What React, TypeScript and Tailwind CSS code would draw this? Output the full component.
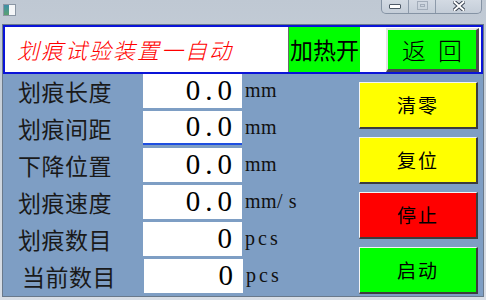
import React from 'react';

const cjk = "font-['Noto_Sans_CJK_SC','Noto_Sans',sans-serif]";

const rows = [
  { label: '划痕长度', value: '0.0', unit: 'mm' },
  { label: '划痕间距', value: '0.0', unit: 'mm', focus: true },
  { label: '下降位置', value: '0.0', unit: 'mm' },
  { label: '划痕速度', value: '0.0', unit: 'mm/ s' },
  { label: '划痕数目', value: '0', unit: 'pcs' },
  { label: '当前数目', value: '0', unit: 'pcs', shift: true },
];

const buttons = [
  { text: '清零', bg: 'bg-[#ffff00]' },
  { text: '复位', bg: 'bg-[#ffff00]' },
  { text: '停止', bg: 'bg-[#ff0000]' },
  { text: '启动', bg: 'bg-[#00ff00]' },
];

const TitleBar = () => (
  <div className="h-[24px] flex items-start justify-between">
    {/* app icon */}
    <div className="ml-[3px] mt-[4px] w-[13px] h-[12px] flex border border-[#8a96a4] bg-white">
      <div className="w-[5px] h-full bg-gradient-to-b from-[#3f8fa8] to-[#5aa070]" />
      <div className="flex-1 bg-[#f4f6f8]" />
    </div>
    {/* caption buttons */}
    <div className="mr-[4px] flex h-[14px] border border-t-0 border-[#8593a4] rounded-b-[5px] overflow-hidden bg-gradient-to-b from-[#d3dae3] to-[#c4cdd8]">
      <div className="w-[27px] flex justify-center pt-[4px] border-r border-[#8d9aaa]">
        <div className="w-[12px] h-[5px] bg-white border border-[#4f5a68] rounded-[1px]" />
      </div>
      <div className="w-[27px] flex justify-center pt-[1px] border-r border-[#8d9aaa]">
        <div className="w-[11px] h-[9px] border border-[#a3adba] flex items-center justify-center">
          <div className="w-[5px] h-[3px] border border-[#a3adba]" />
        </div>
      </div>
      <div className="w-[45px] flex justify-center pt-[1px]">
        <svg width="12" height="10" viewBox="0 0 12 10">
          <path d="M1.5 1 L10.5 9 M10.5 1 L1.5 9" stroke="#3d4654" strokeWidth="4" strokeLinecap="square" />
          <path d="M1.5 1 L10.5 9 M10.5 1 L1.5 9" stroke="#ffffff" strokeWidth="2" strokeLinecap="square" />
        </svg>
      </div>
    </div>
  </div>
);

const Header = () => (
  <div className="h-[49px] border-2 border-[#0a14d8] bg-white flex items-stretch">
    <div className={`w-[283px] pl-[12px] flex items-center text-[22px] font-light italic tracking-[2px] text-[#ff0000] ${cjk}`}>
      划痕试验装置一自动
    </div>
    <div className={`w-[72px] bg-[#00ff00] border-l border-[#6a6a6a] flex items-center justify-center text-[23px] text-black ${cjk}`}>
      加热开
    </div>
    <div className="ml-[26px] mt-[1px] w-[93px] h-[44px] bg-[#00ff00] border-t-2 border-l-2 border-[#e4e4e4] border-r-[3px] border-b-[3px] border-r-[#4a4a4a] border-b-[#4a4a4a] flex items-center justify-center">
      <span className={`text-[24px] font-light tracking-[12px] pl-[12px] text-black ${cjk}`}>返回</span>
    </div>
  </div>
);

export default function App() {
  return (
    <div className="w-[486px] h-[300px] overflow-hidden bg-gradient-to-b from-[#bfc8d3] via-[#cdd5de] to-[#d8dee6]">
      <TitleBar />
      <div className="ml-[2px] w-[482px] h-[273px] border border-[#69798b] bg-[#7e9ec4] flex flex-col">
        <Header />
        <div className="flex flex-1">
          {/* fields */}
          <div className="flex flex-col gap-[3px]">
            {rows.map((r) => (
              <div key={r.label} className="flex items-center h-[34px]">
                <div className={`w-[140px] ${r.shift ? 'pl-[19px]' : 'pl-[15px]'} text-[23px] tracking-[0.5px] text-[#1a1a1a] ${cjk}`}>
                  {r.label}
                </div>
                <div
                  className={`w-[99px] h-full bg-white flex items-center justify-end pr-[5px] text-[29px] tracking-[5px] text-black font-['Liberation_Serif',serif] ${r.focus ? 'border-b-2 border-[#1f4fe0]' : ''} ${r.shift ? 'ml-[1px]' : ''}`}
                >
                  {r.value}
                </div>
                <div className="ml-[3px] pb-[3px] text-[20px] tracking-[0.5px] text-[#111] font-['Liberation_Serif',serif]">
                  {r.unit === 'pcs' ? <span className="tracking-[3px]">pcs</span> : r.unit}
                </div>
              </div>
            ))}
          </div>
          {/* action buttons */}
          <div className="ml-auto mr-[5px] pt-[8px] flex flex-col gap-[8px]">
            {buttons.map((b) => (
              <div
                key={b.text}
                className={`w-[119px] h-[47px] ${b.bg} border-t border-l border-[#f4f4f4] border-r-2 border-b-2 border-r-[#3c3c3c] border-b-[#3c3c3c] flex items-center justify-center`}
              >
                <span className={`text-[19px] tracking-[2px] text-black ${cjk}`}>{b.text}</span>
              </div>
            ))}
          </div>
        </div>
      </div>
    </div>
  );
}
